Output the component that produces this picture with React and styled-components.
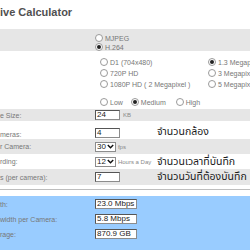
import styled, { createGlobalStyle } from "styled-components";

const GlobalStyle = createGlobalStyle`
    html, body {
        margin: 0;
        padding: 0;
        background: #ffffff;
        overflow: hidden;
    }
    body {
        font-family: "Liberation Sans", Arial, sans-serif;
    }
`;

const Page = styled.div`
    width: 250px;
    height: 250px;
    overflow: hidden;
`;

const Title = styled.h1`
    margin: 0;
    height: 29px;
    padding-top: 6px;
    box-sizing: border-box;
    font-size: 11px;
    line-height: 12px;
    font-weight: bold;
    color: #505050;
`;

const Row = styled.div`
    display: grid;
    grid-template-columns: 95px 60px 1fr;
    align-items: ${(p) => p.$align || "center"};
    height: ${(p) => p.$h}px;
    padding-top: ${(p) => p.$pt || 0}px;
    padding-bottom: ${(p) => p.$pb || 0}px;
    box-sizing: border-box;
    background: ${(p) => (p.$shade ? "#e6e6e6" : "transparent")};
`;

const Wide = styled.div`
    grid-column: 2 / -1;
`;

const Label = styled.div`
    font-size: 7px;
    color: #777;
    white-space: nowrap;
`;

const Cell = styled.div`
    display: flex;
    align-items: center;
    gap: ${(p) => p.$gap ?? 3}px;
    padding-left: ${(p) => p.$indent || 0}px;
    white-space: nowrap;
`;

const Stack = styled.div`
    display: flex;
    flex-direction: column;
    gap: ${(p) => p.$gap ?? 2}px;
`;

const OptionGrid = styled.div`
    display: grid;
    grid-template-columns: 108px 1fr;
    row-gap: 3px;
    padding-left: 5px;
`;

const Option = styled.label`
    display: flex;
    align-items: center;
    gap: 2px;
    font-size: 7px;
    line-height: 7px;
    color: #777;
    white-space: nowrap;
    margin-right: ${(p) => p.$mr || 0}px;
`;

const Radio = styled.span`
    width: 6px;
    height: 6px;
    border-radius: 50%;
    border: 1px solid #9a9a9a;
    background: #fff;
    display: inline-flex;
    align-items: center;
    justify-content: center;
    flex: none;

    &::after {
        content: "";
        width: 4px;
        height: 4px;
        border-radius: 50%;
        background: ${(p) => (p.$on ? "#222" : "transparent")};
    }
`;

const Field = styled.div`
    width: ${(p) => p.$w || 25}px;
    height: 10px;
    box-sizing: border-box;
    border: 1px solid #8c8c8c;
    border-top-color: #555;
    border-left-color: #555;
    background: #fff;
    font-size: 8px;
    line-height: 8px;
    padding-left: 1px;
    color: #222;
`;

const Select = styled.div`
    display: flex;
    align-items: center;
    gap: 1px;
    height: 10px;
    box-sizing: border-box;
    border: 1px solid #8c8c8c;
    background: #fff;
    font-size: 8px;
    line-height: 8px;
    padding: 0 1px;
    color: #222;
`;

const Unit = styled.span`
    font-size: 6px;
    color: #888;
    white-space: nowrap;
`;

const Note = styled.span`
    font-family: "Noto Sans Thai", "Loma", "Garuda", "Noto Sans", sans-serif;
    font-size: 10.5px;
    line-height: 12px;
    color: #1a1a1a;
    white-space: nowrap;
    padding-left: 2px;
`;

const Divider = styled.div`
    height: 1px;
    margin: 4px 0 6px;
    background: #bdbdbd;
`;

const Results = styled.div`
    background: #99ccff;
    padding-top: 3px;
    height: 60px;
    display: flex;
    flex-direction: column;
    gap: 5px;
`;

const ResultRow = styled.div`
    display: grid;
    grid-template-columns: 95px 1fr;
    align-items: center;
`;

function Chevron() {
    return (
        <svg width="7" height="5" viewBox="0 0 7 5">
            <path d="M0.8 1 L3.5 3.8 L6.2 1" fill="none" stroke="#111" strokeWidth="1.4" />
        </svg>
    );
}

function Choice({ on, children, mr }) {
    return (
        <Option $mr={mr}>
            <Radio $on={on} />
            {children}
        </Option>
    );
}

export default function App() {
    return (
        <Page>
            <GlobalStyle />
            <Title>ive Calculator</Title>

            <Row $shade $h={22} $align="start" $pt={5}>
                <Label />
                <Wide>
                    <Stack $gap={1}>
                        <Choice>MJPEG</Choice>
                        <Choice on>H.264</Choice>
                    </Stack>
                </Wide>
            </Row>

            <Row $h={44} $align="start" $pt={7}>
                <Label />
                <Wide>
                    <OptionGrid>
                        <Choice>D1 (704x480)</Choice>
                        <Choice on>1.3 Megapixel</Choice>
                        <Choice>720P HD</Choice>
                        <Choice>3 Megapixel</Choice>
                        <Choice>1080P HD ( 2 Megapixel )</Choice>
                        <Choice>5 Megapixel</Choice>
                    </OptionGrid>
                </Wide>
            </Row>

            <Row $h={14}>
                <Label />
                <Wide>
                    <Cell $gap={0} $indent={5}>
                        <Choice mr={8}>Low</Choice>
                        <Choice on mr={10}>Medium</Choice>
                        <Choice>High</Choice>
                    </Cell>
                </Wide>
            </Row>

            <Row $shade $h={12}>
                <Label>e Size:</Label>
                <Cell>
                    <Field>24</Field>
                    <Unit>KB</Unit>
                </Cell>
            </Row>

            <Row $h={18} $align="end" $pb={1}>
                <Label>meras:</Label>
                <Cell>
                    <Field>4</Field>
                </Cell>
                <Note>จำนวนกล้อง</Note>
            </Row>

            <Row $shade $h={15}>
                <Label>r Camera:</Label>
                <Cell $gap={2}>
                    <Select>
                        30 <Chevron />
                    </Select>
                    <Unit>fps</Unit>
                </Cell>
            </Row>

            <Row $h={15}>
                <Label>rding:</Label>
                <Cell $gap={2}>
                    <Select>
                        12 <Chevron />
                    </Select>
                    <Unit>Hours a Day</Unit>
                </Cell>
                <Note>จำนวนเวลาที่บันทึก</Note>
            </Row>

            <Row $shade $h={16}>
                <Label>s (per camera):</Label>
                <Cell>
                    <Field>7</Field>
                </Cell>
                <Note>จำนวนวันที่ต้องบันทึก</Note>
            </Row>

            <Divider />

            <Results>
                <ResultRow>
                    <Label>th:</Label>
                    <Field $w={42}>23.0 Mbps</Field>
                </ResultRow>
                <ResultRow>
                    <Label>width per Camera:</Label>
                    <Field $w={42}>5.8 Mbps</Field>
                </ResultRow>
                <ResultRow>
                    <Label>rage:</Label>
                    <Field $w={42}>870.9 GB</Field>
                </ResultRow>
            </Results>
        </Page>
    );
}
